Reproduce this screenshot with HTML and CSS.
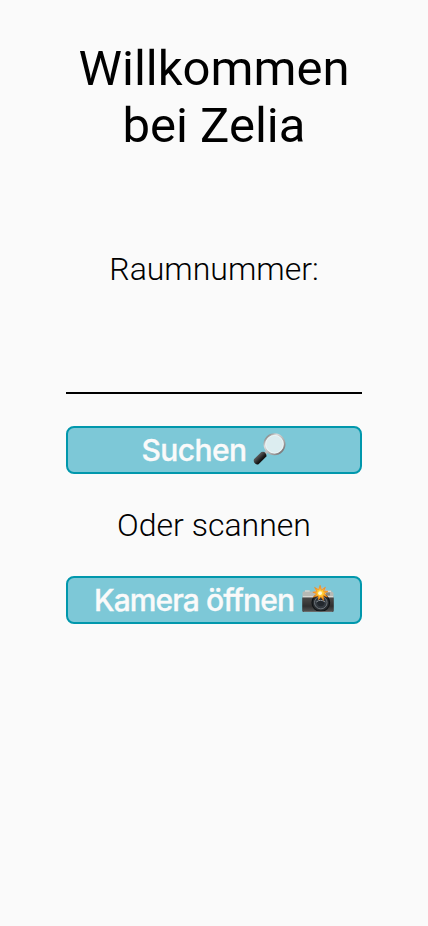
FILE: index.html
```html
<!DOCTYPE html>
<html lang="de">
<head>
<meta charset="utf-8">
<meta name="viewport" content="width=device-width, initial-scale=1">
<title>Zelia</title>
<link rel="stylesheet" href="styles.css">
</head>
<body>
<main class="page">
<h1 class="title">Willkommen<br>bei Zelia</h1>
<label class="label" for="room">Raumnummer:</label>
<input class="field" id="room" type="text">
<button class="button">
<span class="search-text">Suchen</span>
<svg class="icon" viewBox="0 0 40 40" aria-hidden="true">
<defs>
<linearGradient id="rim" x1="0" y1="0" x2="1" y2="1"><stop offset="0" stop-color="#555"/><stop offset=".3" stop-color="#ddd"/><stop offset=".65" stop-color="#aaa"/><stop offset="1" stop-color="#665f60"/></linearGradient>
<linearGradient id="handle" x1="0" y1="0" x2="1" y2="1"><stop offset="0" stop-color="#111"/><stop offset=".35" stop-color="#555"/><stop offset=".6" stop-color="#161616"/><stop offset="1" stop-color="#000"/></linearGradient>
</defs>
<path d="M14.5 24l3-3" stroke="#b9bcbd" stroke-width="3"/>
<path d="M11.4 22.1Q13.5 21 15 22.5t1.6 3.8L8.8 33.9Q7.2 35.3 5.1 33.4T4 29.3Z" fill="url(#handle)"/>
<circle cx="24.5" cy="14.2" r="10.1" fill="#dcedf0" stroke="url(#rim)" stroke-width="1.8"/>
<circle cx="24.5" cy="14.2" r="8.8" fill="none" stroke="#f3f8f8" stroke-width=".7"/>
</svg>
</button>
<p class="label alt">Oder scannen</p>
<button class="button">
<span class="camera-text">Kamera öffnen</span>
<svg class="icon" viewBox="0 0 40 40" aria-hidden="true">
<defs>
<linearGradient id="body" x1="0" y1="0" x2="0" y2="1"><stop offset="0" stop-color="#4d4b49"/><stop offset=".6" stop-color="#302f2f"/><stop offset="1" stop-color="#555"/></linearGradient>
<radialGradient id="flash"><stop offset="0" stop-color="#fffbd0"/><stop offset=".3" stop-color="#ffd33b"/><stop offset="1" stop-color="#f7830b"/></radialGradient>
</defs>
<path d="M4.5 18V13q0-1.4 1.3-1.4h1V10.5h5v1.1H16l3-4h8l2 3h4.5v1.1q2 0 2 1.7V18Z" fill="#b7bab5"/>
<path d="M7 11h4.7M28 11.3h5M5 16.8h30" stroke="#e4e4df"/>
<path d="M4.2 17.5h31.6v13q0 1.5-1.5 1.5H5.7q-1.5 0-1.5-1.5Z" fill="url(#body)"/>
<path d="M28 12.5h4v3h-4Z" fill="#8c8a7d"/>
<circle cx="22.8" cy="22.6" r="8.8" fill="#282b2e" stroke="#111518" stroke-width="1.2"/>
<circle cx="22.8" cy="22.6" r="6.3" fill="#343a40" stroke="#6d747a" stroke-width="1"/>
<circle cx="22.8" cy="22.6" r="3.7" fill="#22272d"/>
<path d="M18.3 22q4-3.4 9 0" fill="none" stroke="#8b9297"/>
<path d="M6 31.5h28" stroke="#777" stroke-width=".7"/>
<path d="M22.1 5.3L23.4 10.2 27.4 7.2 25.6 11.3 30 11.3 26.3 13.4 29.5 17 25.3 15.6 25.5 20.3 22.8 16.7 20.6 19.8 20.2 15.8 15.3 17.2 18.7 13.8 14.8 12.2 19 11.6 16.5 7.3 20.7 9.8Z" fill="url(#flash)" stroke="#f98b16" stroke-width=".6"/>
<circle cx="22" cy="13.2" r="1.8" fill="#fff8d6"/>
</svg>
</button>
</main>
</body>
</html>
```
FILE: styles.css
```css
body { margin: 0; background: #fafafa; color: #000; font-family: Roboto, sans-serif; }
.page { display: flex; flex-direction: column; align-items: center; padding-top: 40px; }
.title { margin: 0; font-size: 49px; line-height: 57px; font-weight: 400; text-align: center; }
.label { margin: 96px 0 0; font-size: 32px; line-height: 38px; font-weight: 300; }
.field { box-sizing: border-box; width: 296px; height: 106px; border: 0; border-bottom: 2px solid #000; background: none; }
.button { box-sizing: border-box; display: flex; justify-content: center; align-items: center; width: 296px; height: 48px; margin-top: 32px; padding: 0; border: 2px solid #0097ac; border-radius: 8px; background: #7dc8d7; color: #fafafa; font: 500 30px/38px Inter, sans-serif; -webkit-text-stroke: 0.35px #fafafa; }
.search-text { letter-spacing: -0.6px; }
.camera-text { letter-spacing: -0.9px; }
.icon { width: 40px; height: 40px; margin: 0 -4px 0 4px; flex: none; }
.alt { margin-top: 32px; }
```
